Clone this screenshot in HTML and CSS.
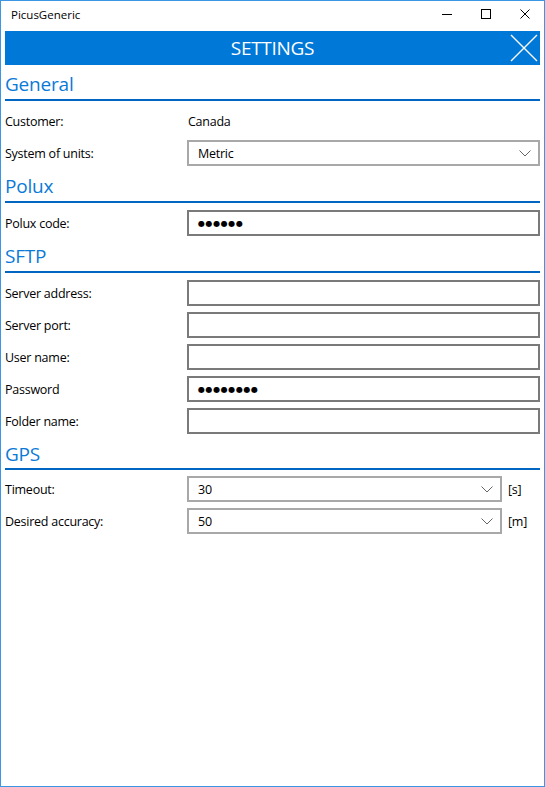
FILE: index.html
```html
<!DOCTYPE html>
<html lang="en">
<head>
<meta charset="utf-8">
<title>PicusGeneric</title>
<link rel="stylesheet" href="styles.css">
</head>
<body>
<div class="window">
  <div class="titlebar">
    <span class="app-title">PicusGeneric</span>
    <div class="caption-buttons">
      <div class="caption-btn"><svg width="10" height="10" viewBox="0 0 10 10"><line x1="0" y1="5.5" x2="10" y2="5.5" stroke="#000" stroke-width="1"/></svg></div>
      <div class="caption-btn"><svg width="10" height="10" viewBox="0 0 10 10"><rect x="0.5" y="0.5" width="9" height="9" fill="none" stroke="#000" stroke-width="1"/></svg></div>
      <div class="caption-btn"><svg width="10" height="10" viewBox="0 0 10 10"><path d="M0.5 0.5 L9.5 9.5 M9.5 0.5 L0.5 9.5" stroke="#000" stroke-width="1" fill="none"/></svg></div>
    </div>
  </div>
  <div class="content">
    <div class="header">
      <span class="header-title">SETTINGS</span>
      <div class="header-close"><svg width="28" height="28" viewBox="0 0 28 28"><path d="M1 1 L27 27 M27 1 L1 27" stroke="#fff" stroke-width="1.4" fill="none"/></svg></div>
    </div>
    <div class="form">
      <h2 class="section-title">General</h2>
      <div class="row"><span class="label">Customer:</span><span class="value">Canada</span></div>
      <div class="row"><span class="label">System of units:</span><div class="combo"><span>Metric</span><svg class="chevron" width="12" height="7" viewBox="0 0 12 7"><polyline points="0.5,0.5 6,6 11.5,0.5" fill="none" stroke="#666" stroke-width="1"/></svg></div></div>

      <h2 class="section-title">Polux</h2>
      <div class="row"><span class="label">Polux code:</span><div class="textbox password">●●●●●●</div></div>

      <h2 class="section-title">SFTP</h2>
      <div class="row"><span class="label">Server address:</span><div class="textbox"></div></div>
      <div class="row"><span class="label">Server port:</span><div class="textbox"></div></div>
      <div class="row"><span class="label">User name:</span><div class="textbox"></div></div>
      <div class="row"><span class="label">Password</span><div class="textbox password">●●●●●●●●</div></div>
      <div class="row"><span class="label">Folder name:</span><div class="textbox"></div></div>

      <h2 class="section-title gps-title">GPS</h2>
      <div class="row unit-row"><span class="label">Timeout:</span><div class="combo"><span>30</span><svg class="chevron" width="12" height="7" viewBox="0 0 12 7"><polyline points="0.5,0.5 6,6 11.5,0.5" fill="none" stroke="#666" stroke-width="1"/></svg></div><span class="unit">[s]</span></div>
      <div class="row unit-row"><span class="label">Desired accuracy:</span><div class="combo"><span>50</span><svg class="chevron" width="12" height="7" viewBox="0 0 12 7"><polyline points="0.5,0.5 6,6 11.5,0.5" fill="none" stroke="#666" stroke-width="1"/></svg></div><span class="unit">[m]</span></div>
    </div>
  </div>
</div>
</body>
</html>
```
FILE: styles.css
```css
html, body {
  margin: 0;
  padding: 0;
  background: #fff;
}
body {
  font-family: "Open Sans", "Noto Sans", sans-serif;
  color: #000;
}
.window {
  width: 545px;
  height: 787px;
  box-sizing: border-box;
  border: 1px solid #3d96e4;
  background: #fff;
  display: flex;
  flex-direction: column;
}
.titlebar {
  height: 30px;
  display: flex;
  align-items: center;
  justify-content: space-between;
  flex-shrink: 0;
}
.app-title {
  font-size: 11.5px;
  padding-left: 10px;
  margin-top: -4px;
}
.caption-buttons {
  display: flex;
  height: 100%;
}
.caption-btn {
  width: 39px;
  display: flex;
  align-items: center;
  justify-content: center;
  margin-top: -4px;
}
.content {
  padding: 0 4px;
  flex: 1;
}
.header {
  height: 34px;
  background: #0078d7;
  display: grid;
  grid-template-columns: 1fr auto 1fr;
  align-items: center;
}
.header-title {
  grid-column: 2;
  color: #fff;
  font-size: 19px;
  letter-spacing: -0.3px;
}
.header-close {
  grid-column: 3;
  justify-self: end;
  margin-right: 2px;
  display: flex;
}
.form {
  padding-top: 5px;
  display: flex;
  flex-direction: column;
  gap: 6px;
}
.section-title {
  margin: 0 0 1px 0;
  height: 29px;
  line-height: 29px;
  font-size: 19px;
  font-weight: 400;
  color: #0a7ad8;
  border-bottom: 2px solid #0066c2;
  letter-spacing: -0.2px;
}
.gps-title {
  height: 28px;
  line-height: 28px;
  margin-bottom: 0;
}
.row {
  display: grid;
  grid-template-columns: 182px 1fr;
  align-items: center;
  height: 26px;
  font-size: 12.5px;
  letter-spacing: -0.25px;
}
.unit-row {
  grid-template-columns: 182px 315px auto;
}
.unit {
  margin-left: 6px;
}
.value {
  padding-left: 1px;
}
.textbox, .combo {
  height: 26px;
  box-sizing: border-box;
  padding: 0 7px 0 9px;
  display: flex;
  align-items: center;
}
.textbox {
  border: 2px solid #7a7a7a;
}
.combo {
  border: 2px solid #a8a8a8;
  justify-content: space-between;
}
.password {
  font-family: "DejaVu Sans", sans-serif;
  font-size: 8px;
  letter-spacing: 0.6px;
}
.chevron {
  display: block;
}
```
